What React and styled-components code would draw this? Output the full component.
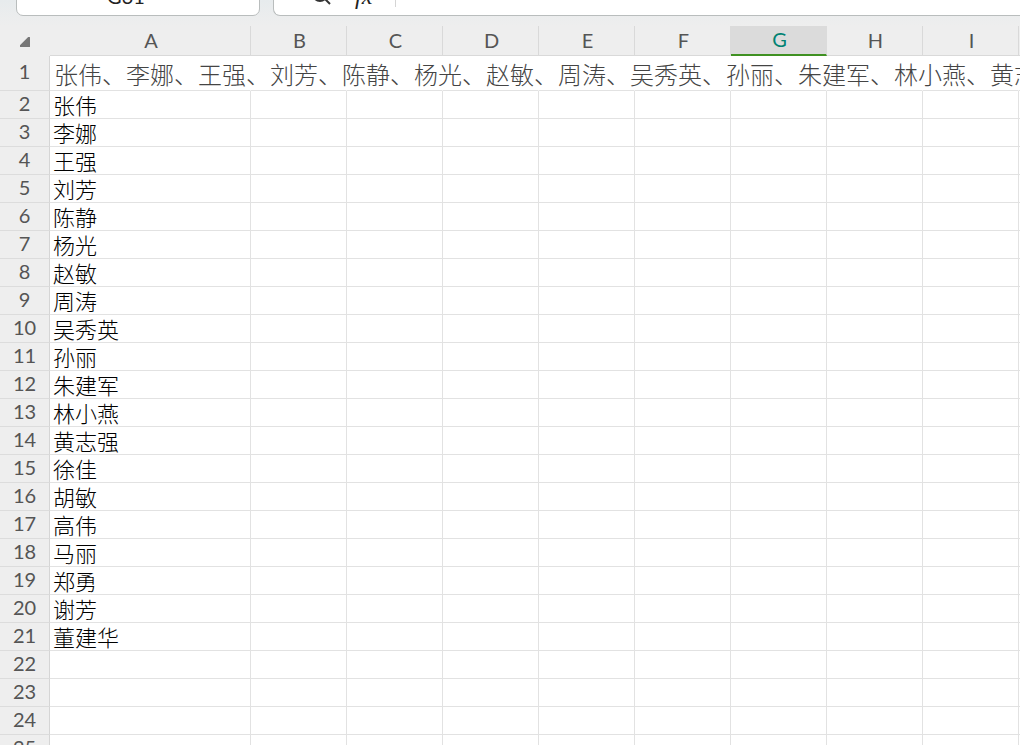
import React from 'react';
import styled, { createGlobalStyle } from 'styled-components';

const names = [
  '张伟', '李娜', '王强', '刘芳', '陈静', '杨光', '赵敏', '周涛', '吴秀英', '孙丽',
  '朱建军', '林小燕', '黄志强', '徐佳', '胡敏', '高伟', '马丽', '郑勇', '谢芳', '董建华',
];

const columns = ['A', 'B', 'C', 'D', 'E', 'F', 'G', 'H', 'I', ''];
const activeColumn = 'G';
const rowCount = 25;

const getValue = (row) => {
  if (row === 1) return names.join('、');
  return names[row - 2] || '';
};

const App = () => {
  return (
    <>
      <GlobalStyle />
      <Page>
        <FormulaBar>
          <NameBox aria-label="Name box" defaultValue="G31" />
          <FormulaBox>
            <SearchIcon viewBox="0 0 22 20" aria-hidden="true">
              <circle cx="10" cy="8" r="7" />
              <path d="M15 13L20 18" />
            </SearchIcon>
            <FxLabel htmlFor="formula">fx</FxLabel>
            <FormulaInput id="formula" />
          </FormulaBox>
        </FormulaBar>

        <Sheet>
          <colgroup>
            <Col $width={50} />
            <Col $width={201} />
            {columns.slice(1, -1).map((name) => (
              <Col key={name} $width={96} />
            ))}
            <col />
          </colgroup>
          <thead>
            <tr>
              <Corner>
                <CornerIcon viewBox="0 0 9 9" aria-hidden="true">
                  <path d="M7.5 0.5L0.5 7.5V8.5H8.5V0.5Z" />
                </CornerIcon>
              </Corner>
              {columns.map((name, i) => (
                <ColumnHead
                  key={name}
                  scope="col"
                  $active={name === activeColumn}
                  $beforeActive={columns[i + 1] === activeColumn}
                >
                  {name}
                </ColumnHead>
              ))}
            </tr>
          </thead>
          <tbody>
            {Array.from({ length: rowCount }, (_, i) => i + 1).map((row) => (
              <tr key={row}>
                <RowHead scope="row" $tall={row === 1}>{row}</RowHead>
                {columns.map((name) => (
                  <Cell key={name} $merged={row === 1}>
                    {name === 'A' && getValue(row)}
                  </Cell>
                ))}
              </tr>
            ))}
          </tbody>
        </Sheet>
      </Page>
    </>
  );
};

const GlobalStyle = createGlobalStyle`
  * {
    box-sizing: border-box;
  }

  body {
    margin: 0;
    overflow: hidden;
    background: #fff;
    font-family: Lato, "Noto Sans CJK SC", sans-serif;
  }
`;

const Page = styled.main`
  height: 100vh;
  overflow: hidden;
`;

/* Scrolled up so that only the lower edge of the bar is visible */
const FormulaBar = styled.div`
  display: flex;
  align-items: flex-end;
  gap: 13px;
  height: 26px;
  padding: 0 0 10px 16px;
  overflow: hidden;
  background: linear-gradient(#e7ebed, #eeeeee);
`;

const NameBox = styled.input`
  flex: none;
  width: 244px;
  height: 40px;
  padding: 0 24px 0 0;
  border: 1px solid #b9bdbd;
  border-radius: 7px;
  background: #fff;
  color: #222;
  font-family: inherit;
  font-size: 20px;
  text-align: center;
`;

const FormulaBox = styled.div`
  display: flex;
  flex: 1;
  align-items: center;
  height: 40px;
  padding-left: 36px;
  border: 1px solid #b9bdbd;
  border-right: 0;
  border-radius: 7px 0 0 7px;
  background: #fff;
`;

const SearchIcon = styled.svg`
  width: 22px;
  height: 20px;
  fill: none;
  stroke: #333;
  stroke-width: 2;
`;

const FxLabel = styled.label`
  width: 63px;
  padding-left: 23px;
  color: #222;
  font-family: "Liberation Serif", serif;
  font-size: 24px;
  font-style: italic;
`;

const FormulaInput = styled.input`
  flex: 1;
  min-width: 0;
  height: 22px;
  border: 0;
  border-left: 1px solid #d5d5d5;
  outline: 0;
`;

const Sheet = styled.table`
  width: 100%;
  table-layout: fixed;
  border-collapse: separate;
  border-spacing: 0;
`;

const Col = styled.col`
  width: ${({ $width }) => $width}px;
`;

const Corner = styled.td`
  height: 30px;
  padding: 2px 0 0 20px;
  border-bottom: 1px solid #eee;
  background: #eee;
`;

const CornerIcon = styled.svg`
  display: block;
  width: 10px;
  height: 10px;
  fill: #777;
  stroke: #777;
  stroke-linejoin: round;
`;

const ColumnHead = styled.th`
  height: 30px;
  padding: 0 0 2px 2px;
  border-right: 1px solid ${({ $active, $beforeActive }) => ($active || $beforeActive ? '#dbdbdb' : '#d9d9d9')};
  border-bottom: ${({ $active }) => ($active ? '2px solid #3f9122' : '1px solid #d9d9d9')};
  background: ${({ $active }) => ($active ? '#dbdbdb' : '#eee')};
  color: ${({ $active }) => ($active ? '#008272' : '#555')};
  font-size: 20px;
  font-weight: 400;
  line-height: 24px;

  &:last-child {
    padding: 0;
    border-right: 0;
  }
`;

const RowHead = styled.th`
  height: ${({ $tall }) => ($tall ? 35 : 28)}px;
  padding: 0 0 4px;
  border-right: 1px solid #d5d5d5;
  border-bottom: 1px solid #dcdcdc;
  background: #eee;
  color: #555;
  font-size: 20px;
  font-weight: 400;
  line-height: 22px;
`;

const Cell = styled.td`
  padding: 0 0 1px ${({ $merged }) => ($merged ? 4 : 3)}px;
  border-right: 1px solid ${({ $merged }) => ($merged ? 'transparent' : '#e2e2e2')};
  border-bottom: 1px solid #e2e2e2;
  color: ${({ $merged }) => ($merged ? '#444' : '#000')};
  font-family: "Noto Sans CJK SC", sans-serif;
  font-size: ${({ $merged }) => ($merged ? 24 : 22)}px;
  font-weight: 300;
  line-height: ${({ $merged }) => ($merged ? 30 : 26)}px;
  vertical-align: bottom;
  white-space: nowrap;

  &:last-child {
    padding: 0;
    border-right: 0;
  }
`;

export default App;
